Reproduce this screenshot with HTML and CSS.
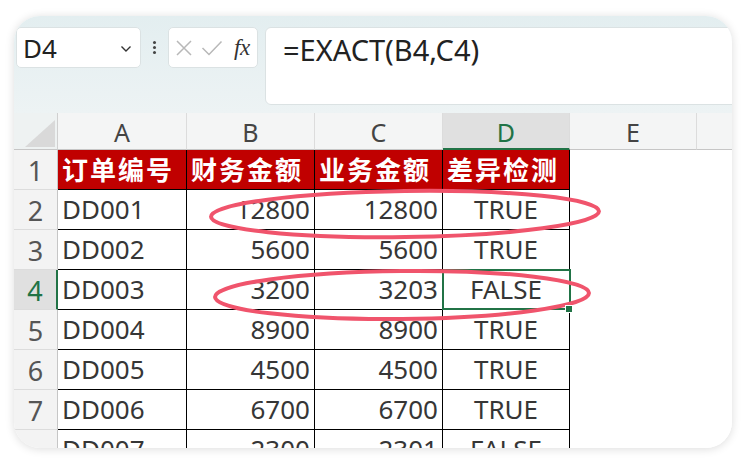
FILE: index.html
```html
<!DOCTYPE html>
<html lang="zh">
<head>
<meta charset="utf-8">
<title>EXACT</title>
<link rel="stylesheet" href="styles.css">
</head>
<body>
<div class="card">
  <div class="formula-bar">
    <div class="namebox">
      <span class="name">D4</span>
      <svg class="chev" width="12" height="8" viewBox="0 0 12 8"><polyline points="1.5,1.5 6,6 10.5,1.5" fill="none" stroke="#333" stroke-width="1.4"/></svg>
    </div>
    <div class="dots"><span></span><span></span><span></span></div>
    <div class="fxbox">
      <svg width="18" height="18" viewBox="0 0 18 18"><path d="M2 2 L16 16 M16 2 L2 16" stroke="#b8b8b8" stroke-width="1.5" fill="none"/></svg>
      <svg width="22" height="18" viewBox="0 0 22 18"><polyline points="1.5,9 8,15.5 20.5,2.5" stroke="#b8b8b8" stroke-width="1.5" fill="none"/></svg>
      <span class="fx">fx</span>
    </div>
    <div class="formula">=EXACT(B4,C4)</div>
  </div>
  <div class="sheet">
    <div class="ch corner"><svg width="44" height="37" viewBox="0 0 44 37"><polygon points="11,34 41,34 41,7" fill="#d9d9d9"/></svg></div>
    <div class="ch">A</div><div class="ch">B</div><div class="ch">C</div><div class="ch sel">D</div><div class="ch">E</div><div class="ch last"></div>

    <div class="rh">1</div>
    <div class="c hd">订单编号</div><div class="c hd">财务金额</div><div class="c hd">业务金额</div><div class="c hd">差异检测</div><div class="e"></div><div class="e"></div>

    <div class="rh">2</div>
    <div class="c l">DD001</div><div class="c r">12800</div><div class="c r">12800</div><div class="c m">TRUE</div><div class="e"></div><div class="e"></div>

    <div class="rh">3</div>
    <div class="c l">DD002</div><div class="c r">5600</div><div class="c r">5600</div><div class="c m">TRUE</div><div class="e"></div><div class="e"></div>

    <div class="rh sel">4</div>
    <div class="c l">DD003</div><div class="c r">3200</div><div class="c r">3203</div><div class="c m active">FALSE</div><div class="e"></div><div class="e"></div>

    <div class="rh">5</div>
    <div class="c l">DD004</div><div class="c r">8900</div><div class="c r">8900</div><div class="c m">TRUE</div><div class="e"></div><div class="e"></div>

    <div class="rh">6</div>
    <div class="c l">DD005</div><div class="c r">4500</div><div class="c r">4500</div><div class="c m">TRUE</div><div class="e"></div><div class="e"></div>

    <div class="rh">7</div>
    <div class="c l">DD006</div><div class="c r">6700</div><div class="c r">6700</div><div class="c m">TRUE</div><div class="e"></div><div class="e"></div>

    <div class="rh"></div>
    <div class="c l">DD007</div><div class="c r">2300</div><div class="c r">2301</div><div class="c m">FALSE</div><div class="e"></div><div class="e"></div>
  </div>
</div>
<svg class="marks" width="746" height="462" viewBox="0 0 746 462">
  <ellipse cx="405" cy="214" rx="194" ry="23" transform="rotate(-0.8 405 214)" fill="none" stroke="#f0546c" stroke-width="4"/>
  <ellipse cx="402" cy="295" rx="187" ry="24" transform="rotate(-0.6 402 295)" fill="none" stroke="#f0546c" stroke-width="4"/>
</svg>
</body>
</html>
```

FILE: styles.css
```css
html, body {
  margin: 0;
  padding: 0;
  background: #ffffff;
}
body {
  position: relative;
  width: 746px;
  height: 462px;
  overflow: hidden;
  font-family: "Noto Sans", "Noto Sans CJK SC", sans-serif;
}
.card {
  position: relative;
  margin: 16px 0 0 14px;
  width: 718px;
  height: 432px;
  border-radius: 26px;
  overflow: hidden;
  background: #ffffff;
  box-shadow: 0 1px 10px rgba(0, 0, 0, 0.14);
}
.formula-bar {
  height: 97px;
  box-sizing: border-box;
  padding: 11px 0 8px 2px;
  display: flex;
  align-items: flex-start;
  background: linear-gradient(180deg, #e3eef0 0%, #edf3f4 100%);
}
.namebox {
  width: 125px;
  height: 41px;
  box-sizing: border-box;
  background: #fff;
  border: 1px solid #dbe2e3;
  border-radius: 5px;
  display: flex;
  align-items: center;
  justify-content: space-between;
  padding: 0 8px 0 6px;
}
.name {
  font-size: 26px;
  color: #222;
  line-height: 1;
}
.chev { margin-top: 2px; }
.dots {
  width: 27px;
  height: 41px;
  display: flex;
  flex-direction: column;
  align-items: center;
  justify-content: center;
  gap: 2px;
}
.dots span {
  width: 3px;
  height: 3px;
  background: #444;
  border-radius: 50%;
}
.fxbox {
  width: 90px;
  height: 41px;
  box-sizing: border-box;
  background: #fff;
  border: 1px solid #dbe2e3;
  border-radius: 5px;
  display: flex;
  align-items: center;
  padding: 0 0 0 6px;
  gap: 8px;
}
.fx {
  font-family: "Liberation Serif", serif;
  font-style: italic;
  font-size: 23px;
  color: #333;
  margin-left: 3px;
  letter-spacing: -0.5px;
}
.formula {
  margin-left: 7px;
  flex: 1;
  margin-right: -20px;
  height: 78px;
  box-sizing: border-box;
  background: #fff;
  border: 1px solid #dbe2e3;
  border-radius: 6px;
  padding: 2px 0 0 17px;
  font-size: 29px;
  line-height: 40px;
  color: #222;
}
.sheet {
  display: grid;
  grid-template-columns: 44px 129px 128px 128px 127px 127px 1fr;
  grid-template-rows: 37px;
  grid-auto-rows: 40px;
}
.ch {
  background: #f4f5f5;
  border-right: 1px solid #dcdcdc;
  border-bottom: 1px solid #c6c6c6;
  box-sizing: border-box;
  font-size: 25px;
  color: #444;
  text-align: center;
  line-height: 39px;
}
.ch.corner {
  background: #eef2f2;
  border-right: 1px solid #d0d0d0;
  line-height: 0;
}
.ch.last { border-right: none; }
.ch.sel {
  background: #e0e0e0;
  color: #217346;
  border-bottom: 2px solid #217346;
}
.rh {
  background: #f3f3f3;
  border-right: 1px solid #c6c6c6;
  border-bottom: 1px solid #dcdcdc;
  box-sizing: border-box;
  font-size: 27px;
  color: #555;
  text-align: center;
  line-height: 42px;
}
.rh.sel {
  background: #e0e0e0;
  color: #217346;
  border-right: 2px solid #217346;
}
.c {
  box-sizing: border-box;
  border-right: 1px solid #000;
  border-bottom: 1px solid #000;
  font-size: 26px;
  line-height: 39px;
  color: #363636;
  white-space: nowrap;
  overflow: hidden;
  position: relative;
}
.c.l { padding-left: 4px; }
.c.r { text-align: right; padding-right: 4px; }
.c.m { text-align: center; }
.c.hd {
  background: #c00000;
  color: #fff;
  font-family: "Noto Sans CJK SC", sans-serif;
  font-weight: 700;
  font-size: 26px;
  letter-spacing: 2px;
  padding-left: 4px;
  line-height: 38px;
}
.c.active { overflow: visible; }
.c.active::after {
  content: "";
  position: absolute;
  left: -1px;
  top: -1px;
  right: -2px;
  bottom: -1px;
  border: 2px solid #217346;
}
.c.active::before {
  content: "";
  position: absolute;
  right: -4px;
  bottom: -4px;
  width: 6px;
  height: 6px;
  background: #217346;
  border: 1px solid #fff;
  z-index: 2;
}
.e { background: #fff; }
.marks {
  position: absolute;
  left: 0;
  top: 0;
  pointer-events: none;
}
```
